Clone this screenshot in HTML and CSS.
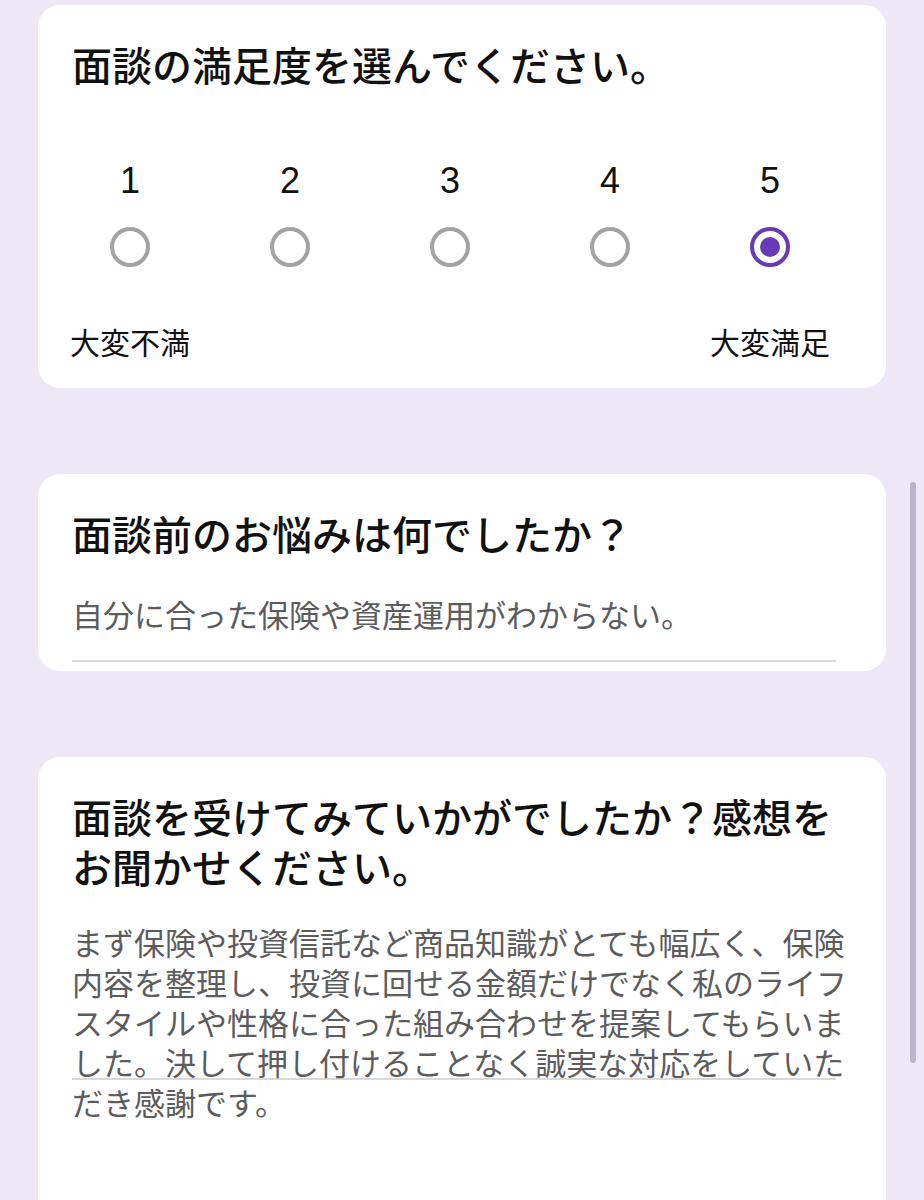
FILE: index.html
```html
<!DOCTYPE html>
<html lang="ja">
<head>
    <meta charset="UTF-8">
    <meta name="viewport" content="width=device-width, initial-scale=1.0">
    <title>面談アンケート</title>
    <link rel="stylesheet" href="styles.css">
</head>
<body>
    <main class="form">
        <!-- 満足度 -->
        <section class="card">
            <h2 class="question">面談の満足度を選んでください。</h2>
            <div class="scale">
                <span class="scale-num">1</span>
                <span class="scale-num">2</span>
                <span class="scale-num">3</span>
                <span class="scale-num">4</span>
                <span class="scale-num">5</span>

                <span class="radio"></span>
                <span class="radio"></span>
                <span class="radio"></span>
                <span class="radio"></span>
                <span class="radio checked"></span>

                <span class="scale-label">大変不満</span>
                <span class="scale-label end">大変満足</span>
            </div>
        </section>

        <!-- お悩み -->
        <section class="card card-short">
            <h2 class="question">面談前のお悩みは何でしたか？</h2>
            <div class="answer">
                <p class="answer-text">自分に合った保険や資産運用がわからない。</p>
            </div>
        </section>

        <!-- 感想 -->
        <section class="card card-long">
            <h2 class="question">面談を受けてみていかがでしたか？感想をお聞かせください。</h2>
            <div class="answer answer-long">
                <p class="answer-text">まず保険や投資信託など商品知識がとても幅広く、保険内容を整理し、投資に回せる金額だけでなく私のライフスタイルや性格に合った組み合わせを提案してもらいました。決して押し付けることなく誠実な対応をしていただき感謝です。</p>
            </div>
        </section>
    </main>

    <div class="scroll-thumb"></div>
</body>
</html>
```

FILE: styles.css
```css
* {
    margin: 0;
    padding: 0;
    box-sizing: border-box;
}

:root {
    --page-bg: #ede7f6;
    --card-bg: #ffffff;
    --title-text: #111111;
    --answer-text: #5c5c5c;
    --radio-off: #a3a3a3;
    --accent: #673ab7;
    --line: #d9d9d9;
}

body {
    background: var(--page-bg);
    color: var(--title-text);
    font-family: "Liberation Sans", "Noto Sans CJK JP", sans-serif;
    overflow: hidden;
}

.form {
    display: flex;
    flex-direction: column;
    gap: 86px;
    padding: 5px 38px 0;
}

.card {
    background: var(--card-bg);
    border-radius: 22px;
    padding: 37px 34px 24px;
}

.card-short {
    padding-bottom: 9px;
}

.card-long {
    min-height: 520px;
}

.question {
    font-size: 40px;
    line-height: 50px;
    font-weight: 500;
}

/* 1〜5 のスケール */
.scale {
    display: grid;
    grid-template-columns: repeat(5, 160px);
    justify-items: center;
    align-items: center;
    margin: 71px 0 0 -22px;
}

.scale-num {
    font-size: 36px;
    line-height: 36px;
}

.radio {
    width: 40px;
    height: 40px;
    margin-top: 28px;
    border: 4px solid var(--radio-off);
    border-radius: 50%;
    display: flex;
    align-items: center;
    justify-content: center;
}

.radio.checked {
    border-color: var(--accent);
}

.radio.checked::after {
    content: "";
    width: 20px;
    height: 20px;
    border-radius: 50%;
    background: var(--accent);
}

.scale-label {
    font-size: 30px;
    line-height: 40px;
    margin-top: 57px;
}

.scale-label.end {
    grid-column: 5;
}

/* 回答欄 */
.answer {
    margin: 36px 16px 0 0;
    height: 65px;
    border-bottom: 2px solid var(--line);
}

.answer-long {
    margin-top: 31px;
    height: 155px;
}

.answer-text {
    margin-right: -16px;
    font-size: 31px;
    line-height: 40px;
    color: var(--answer-text);
}

.scroll-thumb {
    position: absolute;
    top: 482px;
    right: 8px;
    width: 6px;
    height: 581px;
    border-radius: 3px;
    background: rgba(60, 50, 80, 0.28);
}
```
